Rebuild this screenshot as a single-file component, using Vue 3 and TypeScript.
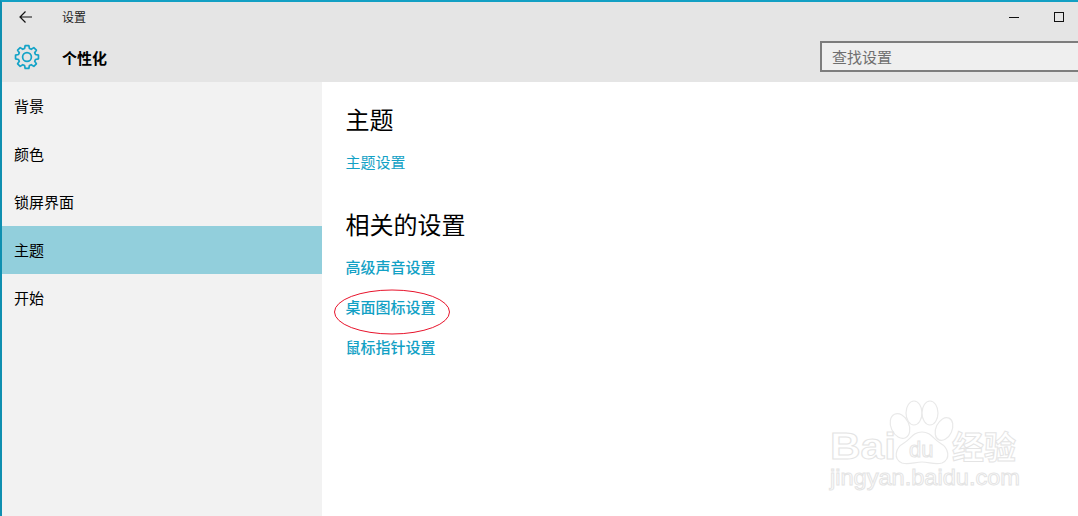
<script setup lang="ts">
const navItems: string[] = ['背景', '颜色', '锁屏界面', '主题', '开始']
const activeItem = '主题'

function gearPath(cx: number, cy: number, outer: number, root: number, teeth: number): string {
  const step = (Math.PI * 2) / teeth
  const pts: string[] = []
  for (let i = 0; i < teeth; i++) {
    const a = i * step - Math.PI / 2
    const offsets: Array<[number, number]> = [
      [-0.36, root],
      [-0.2, outer],
      [0.2, outer],
      [0.36, root],
    ]
    for (const [o, r] of offsets) {
      const t = a + o * step
      pts.push(`${(cx + r * Math.cos(t)).toFixed(2)} ${(cy + r * Math.sin(t)).toFixed(2)}`)
    }
  }
  return `M${pts.join('L')}Z`
}
const gear = gearPath(13, 13, 11.6, 8.8, 8)
</script>

<template>
  <div class="window">
    <header class="header">
      <div class="titlebar">
        <button class="back" aria-label="返回">
          <svg width="16" height="14" viewBox="0 0 16 14" fill="none" stroke="#111" stroke-width="1.2">
            <path d="M14 7H2M7.5 1.5 2 7l5.5 5.5" />
          </svg>
        </button>
        <span class="app-title">设置</span>
        <div class="window-controls">
          <span class="minimize"></span>
          <span class="maximize"></span>
        </div>
      </div>
      <div class="pagebar">
        <svg class="gear" width="26" height="26" viewBox="0 0 26 26" fill="none" stroke="#14a3c7" stroke-width="1.7" stroke-linejoin="round">
          <path :d="gear" />
          <circle cx="13" cy="13" r="4.4" />
        </svg>
        <span class="page-title">个性化</span>
        <div class="search">查找设置</div>
      </div>
    </header>

    <div class="body">
      <nav class="sidebar">
        <div
          v-for="item in navItems"
          :key="item"
          class="nav-item"
          :class="{ active: item === activeItem }"
        >{{ item }}</div>
      </nav>
      <main class="content">
        <h2 class="heading first">主题</h2>
        <a class="link single">主题设置</a>
        <h2 class="heading second">相关的设置</h2>
        <div class="link-list">
          <a class="link strong">高级声音设置</a>
          <a class="link strong">桌面图标设置</a>
          <a class="link strong">鼠标指针设置</a>
        </div>
      </main>
    </div>

    <svg class="annotation" width="120" height="48" viewBox="0 0 120 48" fill="none">
      <ellipse cx="60" cy="24" rx="57.5" ry="22" stroke="#e8142c" stroke-width="1" />
    </svg>

    <svg class="watermark" width="210" height="110" viewBox="0 0 210 110">
      <g fill="#fff" stroke="#e9e9e9" stroke-width="1.2">
        <ellipse cx="81" cy="37" rx="9" ry="13" transform="rotate(-25 81 37)" />
        <ellipse cx="95" cy="24" rx="8" ry="12" />
        <ellipse cx="111" cy="24" rx="8" ry="12" />
        <ellipse cx="125" cy="40" rx="8" ry="12" transform="rotate(25 125 40)" />
        <path d="M103 43c9 0 11 7 18 11 9 5 11 16 2 20-7 2-13-1-20-1s-13 3-20 1c-9-4-7-15 2-20 7-4 9-11 18-11z" />
      </g>
      <g fill="#fff" stroke="#e4e4e4" stroke-width="1">
        <text x="11" y="70" class="wm-big" textLength="66" lengthAdjust="spacingAndGlyphs">Bai</text>
        <text x="90" y="68" class="wm-du">du</text>
        <text x="133" y="70" class="wm-cjk">经验</text>
        <text x="11" y="96" class="wm-url" textLength="190" lengthAdjust="spacingAndGlyphs">jingyan.baidu.com</text>
      </g>
    </svg>
  </div>
</template>

<style>
html, body { margin: 0; background: #fff; }
</style>

<style scoped>
.window {
  position: relative;
  width: 1078px;
  height: 516px;
  box-sizing: border-box;
  overflow: hidden;
  display: flex;
  flex-direction: column;
  border-top: 2px solid #12a0c4;
  border-left: 2px solid #0f8fb0;
  background: #fff;
  font-family: "Noto Sans CJK SC", "Liberation Sans", sans-serif;
  color: #000;
}
.header {
  height: 80px;
  flex: none;
  background: #e5e5e5;
  display: flex;
  flex-direction: column;
}
.titlebar {
  height: 30px;
  display: flex;
  align-items: center;
}
.back {
  width: 60px;
  height: 30px;
  padding: 0 0 0 16px;
  border: 0;
  background: none;
  display: flex;
  align-items: center;
}
.app-title { font-size: 12px; color: #222; margin-bottom: 2px; }
.window-controls {
  margin-left: auto;
  display: flex;
  align-items: center;
  gap: 35px;
  padding-right: 14px;
}
.minimize { width: 10px; height: 1px; background: #111; }
.maximize { width: 8px; height: 8px; border: 1px solid #111; }
.pagebar {
  height: 50px;
  display: flex;
  align-items: center;
  padding-left: 12px;
}
.gear { flex: none; margin-right: 22px; }
.page-title { font-size: 15px; font-weight: 700; }
.search {
  margin-left: auto;
  margin-right: -40px;
  margin-bottom: 2px;
  width: 298px;
  height: 31px;
  box-sizing: border-box;
  border: 2px solid #7d7d7d;
  background: #efefef;
  color: #6e6e6e;
  font-size: 15px;
  line-height: 27px;
  padding-left: 10px;
}
.body { flex: 1; display: flex; min-height: 0; }
.sidebar { width: 320px; flex: none; background: #f2f2f2; }
.nav-item {
  height: 48px;
  line-height: 48px;
  padding-left: 12px;
  font-size: 15px;
}
.nav-item.active { background: #92cfdc; }
.content { flex: 1; padding-left: 23.5px; }
.heading { margin: 0; font-size: 24px; font-weight: 400; line-height: 32px; }
.heading.first { margin-top: 21px; }
.heading.second { margin-top: 36px; }
.link { display: block; color: #12a1c5; font-size: 15px; line-height: 20px; }
.link.single { margin-top: 17px; }
.link-list { display: flex; flex-direction: column; gap: 20px; margin-top: 17px; }
.link.strong { font-weight: 500; }
.annotation { position: absolute; left: 330px; top: 286px; }
.watermark { position: absolute; left: 817px; top: 387px; }
.wm-big { font: 700 36px "Liberation Sans", sans-serif; }
.wm-du { font: 400 22px "Liberation Sans", sans-serif; }
.wm-cjk { font: 700 32px "Noto Sans CJK SC", sans-serif; }
.wm-url { font: 400 22.5px "Liberation Sans", sans-serif; }
</style>
